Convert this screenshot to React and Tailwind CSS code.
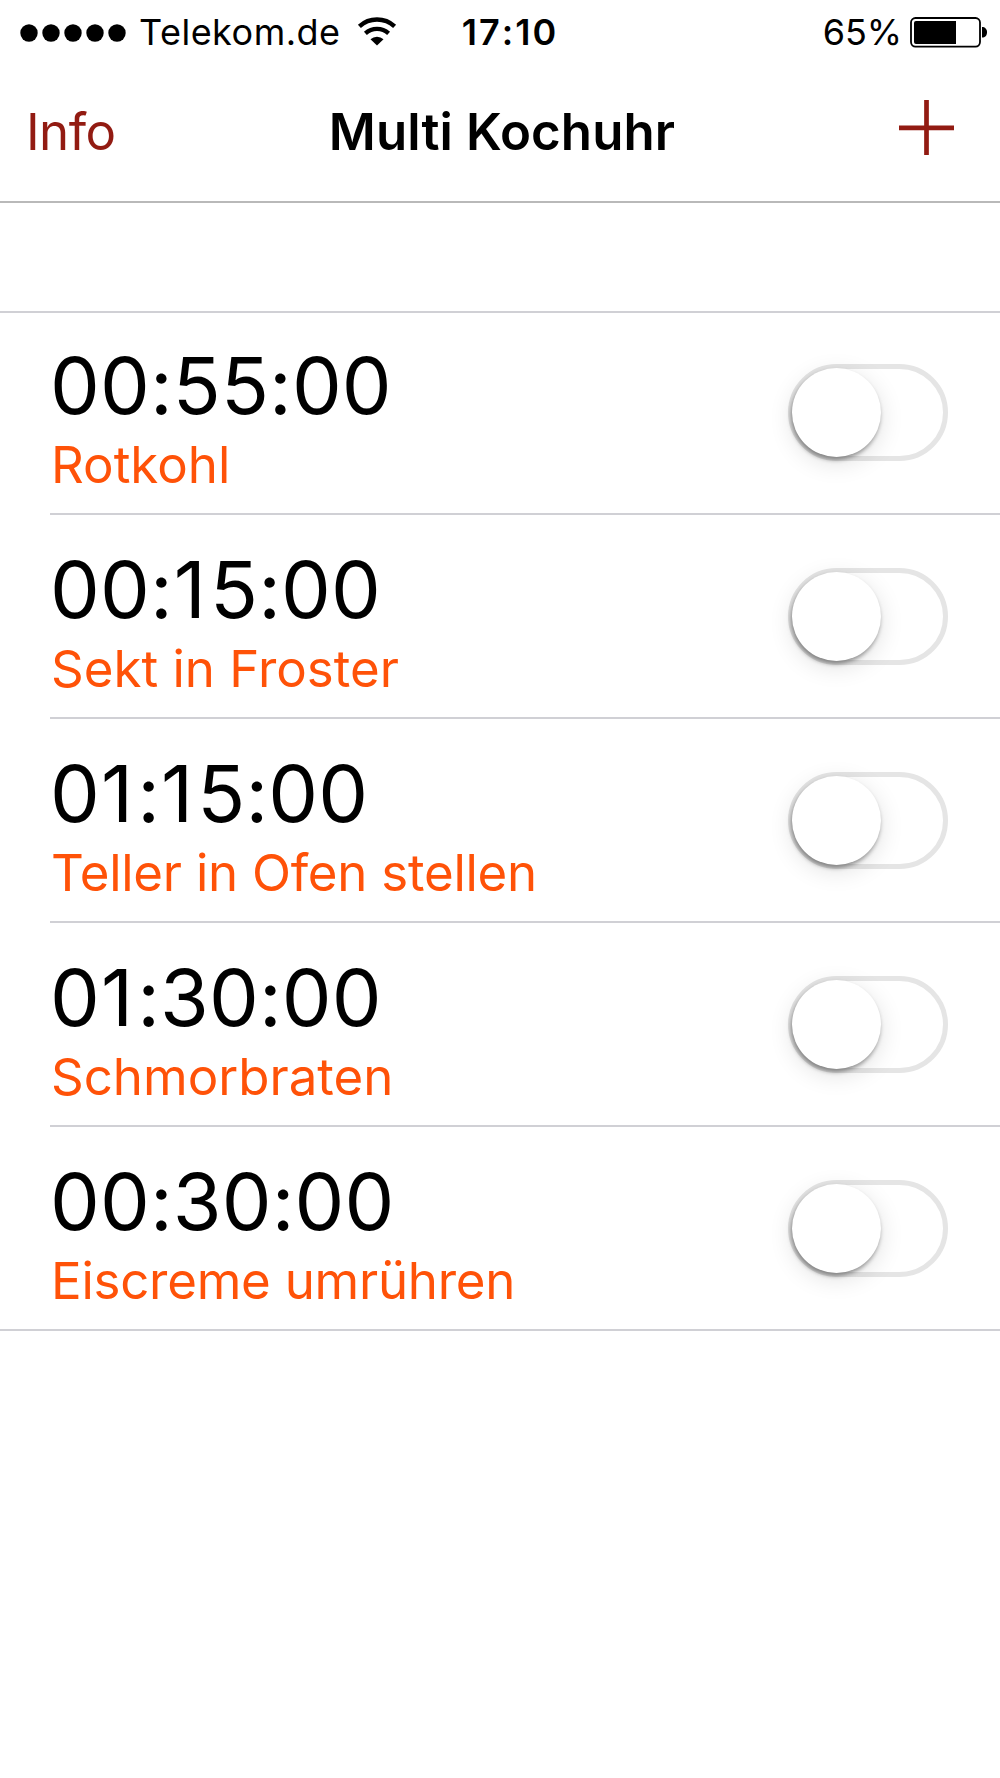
import { useState } from "react";

const initialTimers = [
  { id: 1, time: "00:55:00", name: "Rotkohl", tracking: "tracking-normal", on: false },
  { id: 2, time: "00:15:00", name: "Sekt in Froster", tracking: "tracking-normal", on: false },
  { id: 3, time: "01:15:00", name: "Teller in Ofen stellen", tracking: "tracking-[-0.25px]", on: false },
  { id: 4, time: "01:30:00", name: "Schmorbraten", tracking: "tracking-normal", on: false },
  { id: 5, time: "00:30:00", name: "Eiscreme umrühren", tracking: "tracking-[-0.25px]", on: false },
];

function StatusBar() {
  return (
    <div className="grid h-[65px] grid-cols-[1fr_auto_1fr] items-center pl-[20px] pr-[13px] text-[36px] leading-none">
      <div className="flex items-center">
        <svg className="h-[18px] w-[106px]" viewBox="0 0 106 18">
          {[9, 31, 53, 75, 97].map((cx) => (
            <circle key={cx} cx={cx} cy="9" r="8.7" />
          ))}
        </svg>
        <span className="-mt-[2px] ml-[13px] tracking-[0.5px]">Telekom.de</span>
        <svg className="-mt-[2px] ml-[16px] h-[29px] w-[40px]" viewBox="0 0 40 29">
          <path d="M2.4 9.3a26 26 0 0 1 35.2 0" fill="none" stroke="#000" strokeWidth="4.4" />
          <path d="M8.4 16.3a17.5 17.5 0 0 1 23.2 0" fill="none" stroke="#000" strokeWidth="4.4" />
          <path d="M13.5 22.3a9.5 9.5 0 0 1 13 0L20 28.5z" />
        </svg>
      </div>
      <span className="-mt-[2px] pl-[13px] font-semibold tracking-[2px] [font-kerning:none]">17:10</span>
      <div className="flex items-center justify-end">
        <span className="-mt-[2px] tracking-[-0.1px]">65%</span>
        <svg className="ml-[8px] h-[31px] w-[77px]" viewBox="0 0 77 31">
          <rect x="1" y="1" width="69" height="28.6" rx="4.5" fill="none" stroke="#000" strokeWidth="1.8" />
          <path d="M6 4h40v23H6a2 2 0 0 1-2-2V6a2 2 0 0 1 2-2z" />
          <path d="M72 10c3 0 5 2 5 5.3S75 20.6 72 20.6z" />
        </svg>
      </div>
    </div>
  );
}

function NavBar() {
  return (
    <div className="grid h-[138px] grid-cols-[1fr_auto_1fr] items-start border-b-2 border-[#b9b9b9] pl-[26px] pr-[46px] pt-[35px] text-[51px]">
      <button className="justify-self-start leading-[64px] tracking-[-0.6px] text-[#921b12]">Info</button>
      <h1 className="pl-[24px] font-semibold leading-[64px] tracking-[0.1px]">Multi Kochuhr</h1>
      <button className="justify-self-end" aria-label="Neu">
        <svg className="h-[55px] w-[55px]" viewBox="0 0 55 55">
          <path d="M27.5 0v55M0 27.8h55" stroke="#921b12" strokeWidth="4.7" />
        </svg>
      </button>
    </div>
  );
}

function Toggle({ on, onChange }) {
  return (
    <button
      role="switch"
      aria-checked={on}
      onClick={onChange}
      className={`flex h-[97px] w-[160px] items-center rounded-full border-[5px] ${
        on ? "justify-end border-[#4cd964] bg-[#4cd964]" : "border-[#e5e5e5] bg-white"
      }`}
    >
      <span className="-ml-px h-[89px] w-[89px] rounded-full bg-white shadow-[-1px_3px_4px_rgba(0,0,0,0.38),0_6px_24px_rgba(0,0,0,0.12)]" />
    </button>
  );
}

// the "1" is narrow, so give it a little more room than the other digits
function Time({ value }) {
  return (
    <div className="text-[79px] leading-[96px] tracking-[0.1px]">
      {value.split("").map((c, i) =>
        c === "1" ? (
          <span key={i} className="ml-px mr-[4px]">{c}</span>
        ) : (
          c
        )
      )}
    </div>
  );
}

function TimerRow({ timer, onToggle }) {
  return (
    <li className="ml-[50px] flex h-[204px] items-start justify-between border-b-2 border-[#d0d0d5] pr-[52px] first:-mt-[2px] last:ml-0 last:pl-[50px]">
      <div className="pt-[26px]">
        <Time value={timer.time} />
        <div className={`ml-px mt-px text-[51px] leading-[62px] text-[#ff5208] ${timer.tracking}`}>{timer.name}</div>
      </div>
      <div className="pt-[53px]">
        <Toggle on={timer.on} onChange={() => onToggle(timer.id)} />
      </div>
    </li>
  );
}

export default function App() {
  const [timers, setTimers] = useState(initialTimers);

  const toggleTimer = (id) => {
    setTimers((list) => list.map((t) => (t.id === id ? { ...t, on: !t.on } : t)));
  };

  return (
    <div className="min-h-[1778px] w-[1000px] bg-white font-[Inter,sans-serif] text-black">
      <StatusBar />
      <NavBar />
      <ul className="mt-[108px] border-t-2 border-[#d0d0d5]">
        {timers.map((t) => (
          <TimerRow key={t.id} timer={t} onToggle={toggleTimer} />
        ))}
      </ul>
    </div>
  );
}
